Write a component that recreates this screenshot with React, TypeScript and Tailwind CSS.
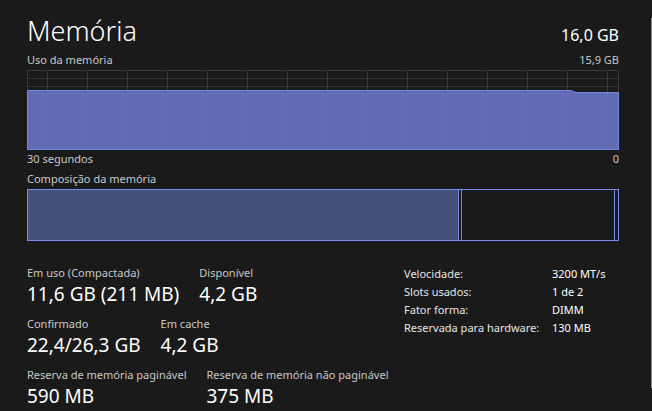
import React from "react";

const font = { fontFamily: '"Noto Sans", "Segoe UI", sans-serif' };

function Graph() {
  const w = 592;
  const h = 80;
  const vlines: number[] = [];
  for (let x = 20; x < w - 1; x += 40) vlines.push(x);
  const hlines: number[] = [];
  for (let y = 8; y < h - 1; y += 8) hlines.push(y);
  const pts = `0.5,20.5 544,20.5 549,22.5 ${w - 0.5},22.5 ${w - 0.5},${h - 0.5} 0.5,${h - 0.5}`;
  return (
    <svg width={w} height={h} viewBox={`0 0 ${w} ${h}`} className="block">
      <rect x={0.5} y={0.5} width={w - 1} height={h - 1} fill="none" stroke="#3a3a3a" />
      {vlines.map((x) => (
        <line key={"v" + x} x1={x + 0.5} y1={1} x2={x + 0.5} y2={h - 1} stroke="#363636" />
      ))}
      {hlines.map((y) => (
        <line key={"h" + y} x1={1} y1={y + 0.5} x2={w - 1} y2={y + 0.5} stroke="#363636" />
      ))}
      <polygon points={pts} fill="#6874c4" fillOpacity={0.9} />
      <polyline points={`0.5,${h - 0.5} ${pts} 0.5,20.5`} fill="none" stroke="#7789e6" />
    </svg>
  );
}

function Stat({ label, value }: { label: string; value: string }) {
  return (
    <div className="flex flex-col">
      <div className="text-[11px] leading-[16px] text-[#c8c8c8] whitespace-nowrap">{label}</div>
      <div className="text-[19px] leading-[26px] text-white whitespace-nowrap">{value}</div>
    </div>
  );
}

export default function App() {
  return (
    <div className="relative w-[652px] h-[411px] overflow-hidden bg-[#1a1a1a]" style={font}>
      <div className="pl-[27px] pr-[33px] pt-[13px]">
        <div className="flex items-baseline justify-between">
          <div className="text-[27px] leading-[36px] text-white font-light">Memória</div>
          <div className="text-[16px] leading-[20px] text-white">16,0 GB</div>
        </div>
        <div className="flex justify-between text-[11px] leading-[16px] text-[#c8c8c8] mt-[3px]">
          <span>Uso da memória</span>
          <span>15,9 GB</span>
        </div>
        <div className="mt-[2px]">
          <Graph />
        </div>
        <div className="flex justify-between text-[11px] leading-[16px] text-[#c8c8c8] mt-[1px]">
          <span>30 segundos</span>
          <span>0</span>
        </div>
        <div className="text-[11px] leading-[16px] text-[#c8c8c8] mt-[4px]">Composição da memória</div>
        <div className="mt-[2px] flex h-[52px] border border-[#788cf0]">
          <div className="w-[431px] bg-[#45507a] border-r border-[#788cf0]" />
          <div className="w-[2px]" />
          <div className="flex-1 border-l border-r border-[#788cf0]" />
          <div className="w-[3px]" />
        </div>
        <div className="mt-[24px] flex">
          <div className="flex-1 min-w-0 flex flex-col gap-[9px]">
            <div className="flex gap-[20px]">
              <Stat label="Em uso (Compactada)" value="11,6 GB (211 MB)" />
              <Stat label="Disponível" value="4,2 GB" />
            </div>
            <div className="flex gap-[20px]">
              <Stat label="Confirmado" value="22,4/26,3 GB" />
              <Stat label="Em cache" value="4,2 GB" />
            </div>
            <div className="flex gap-[20px]">
              <Stat label="Reserva de memória paginável" value="590 MB" />
              <Stat label="Reserva de memória não paginável" value="375 MB" />
            </div>
          </div>
          <div className="w-[215px] shrink-0 grid grid-cols-[148px_1fr] content-start text-[11px] leading-[18px] text-[#e6e6e6] whitespace-nowrap">
            <span>Velocidade:</span>
            <span className="text-white">3200 MT/s</span>
            <span>Slots usados:</span>
            <span className="text-white">1 de 2</span>
            <span>Fator forma:</span>
            <span className="text-white">DIMM</span>
            <span>Reservada para hardware:</span>
            <span className="text-white">130 MB</span>
          </div>
        </div>
      </div>
      <div className="absolute right-0 top-[18px] h-[370px] w-px bg-[#8a8a8a]" />
    </div>
  );
}
